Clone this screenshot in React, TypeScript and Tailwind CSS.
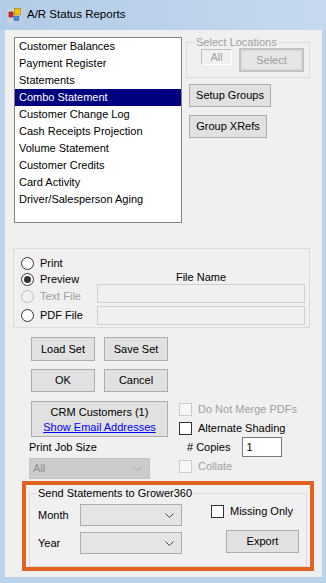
import React from 'react';

const font = "font-['Liberation_Sans',Arial,sans-serif]";

const reports = [
  'Customer Balances',
  'Payment Register',
  'Statements',
  'Combo Statement',
  'Customer Change Log',
  'Cash Receipts Projection',
  'Volume Statement',
  'Customer Credits',
  'Card Activity',
  'Driver/Salesperson Aging',
];

const Btn: React.FC<{ className?: string; children: React.ReactNode }> = ({ className = '', children }) => (
  <button className={`flex items-center justify-center border border-[#adadad] bg-[#e1e1e1] text-black leading-none ${className}`}>
    {children}
  </button>
);

const Radio: React.FC<{ label: string; checked?: boolean; disabled?: boolean; className?: string }> = ({ label, checked, disabled, className = '' }) => (
  <div className={`flex items-center h-[16px] ${className}`}>
    <span
      className={`flex items-center justify-center w-[13px] h-[13px] rounded-full border ${disabled ? 'border-[#bcbcbc] bg-[#f0f0f0]' : 'border-[#333333] bg-white'}`}
    >
      {checked && <span className="w-[7px] h-[7px] rounded-full bg-[#333333]" />}
    </span>
    <span className={`ml-[6px] ${disabled ? 'text-[#a0a0a0]' : 'text-black'}`}>{label}</span>
  </div>
);

const Check: React.FC<{ label: string; disabled?: boolean; className?: string }> = ({ label, disabled, className = '' }) => (
  <div className={`flex items-center h-[13px] ${className}`}>
    <span className={`w-[13px] h-[13px] border ${disabled ? 'border-[#cccccc] bg-[#f7f7f7]' : 'border-[#333333] bg-white'}`} />
    <span className={`ml-[6px] ${disabled ? 'text-[#a0a0a0]' : 'text-black'}`}>{label}</span>
  </div>
);

const Chevron: React.FC<{ color?: string }> = ({ color = '#444444' }) => (
  <svg width="9" height="5" viewBox="0 0 9 5" className="mr-[7px]">
    <polyline points="0.5,0.5 4.5,4.5 8.5,0.5" fill="none" stroke={color} strokeWidth="1" />
  </svg>
);

export default function App() {
  return (
    <div className={`w-[326px] h-[583px] bg-[#bcd3ec] flex flex-col text-[11px] ${font}`}>
      {/* title bar */}
      <div className="h-[30px] flex items-center bg-gradient-to-r from-[#b2cbe6] to-[#c6d9ee]">
        <svg width="16" height="16" viewBox="0 0 16 16" className="ml-[7px]">
          <rect x="0.5" y="1.5" width="14" height="14" fill="#dcdcdc" opacity="0.5" />
          <rect x="2" y="5" width="4" height="5" fill="#d8232a" stroke="#8a1010" strokeWidth="0.6" />
          <rect x="7.5" y="1.5" width="6" height="6.5" fill="#f2c200" stroke="#a08000" strokeWidth="0.6" />
          <rect x="7" y="9.5" width="5" height="4" fill="#4a8fe0" stroke="#2a60b0" strokeWidth="0.6" />
        </svg>
        <span className="ml-[4px] text-[11.5px] text-black">A/R Status Reports</span>
      </div>

      {/* client area */}
      <div className="ml-[5px] mr-[4px] h-[547px] bg-[#f0f0f0] flex flex-col">
        <div className="flex items-start">
          <div className="ml-[9px] mt-[7px] w-[168px] h-[186px] border border-[#828282] bg-white">
            {reports.map(r => (
              <div
                key={r}
                className={`h-[17px] leading-[17px] pl-[4px] ${r === 'Combo Statement' ? 'bg-[#000080] text-white' : 'text-black'}`}
              >
                {r}
              </div>
            ))}
          </div>

          <div className="ml-[4px] flex flex-col items-start">
            <fieldset className="mt-[6px] w-[124px] h-[42px] border border-[#dcdcdc] pl-[8px]">
              <legend className="px-[1px] leading-[13px] text-[#a0a0a0]">Select Locations</legend>
              <div className="flex items-start">
                <div className="ml-[6px] w-[31px] h-[16px] border border-[#bfbfbf] border-r-white border-b-white flex items-center justify-center text-[#a0a0a0]">
                  All
                </div>
                <div className="ml-[7px] -mt-[1px] w-[65px] h-[24px] border-2 border-[#c4c4c4] bg-[#e5e5e5] flex items-center justify-center text-[#a0a0a0]">
                  <span className="w-full h-full border border-[#dadada] flex items-center justify-center">Select</span>
                </div>
              </div>
            </fieldset>
            <Btn className="ml-[3px] mt-[6px] w-[82px] h-[23px]">Setup Groups</Btn>
            <Btn className="ml-[3px] mt-[8px] w-[78px] h-[23px]">Group XRefs</Btn>
          </div>
        </div>

        {/* output options */}
        <div className="ml-[8px] mt-[25px] w-[297px] h-[80px] border border-[#dcdcdc] flex">
          <div className="flex flex-col pl-[7px] pt-[6px] w-[83px]">
            <Radio label="Print" />
            <Radio label="Preview" checked />
            <Radio label="Text File" disabled className="mt-[1px]" />
            <Radio label="PDF File" className="mt-[3px]" />
          </div>
          <div className="flex flex-col pt-[22px]">
            <div className="h-[13px] leading-[13px] text-center text-black">File Name</div>
            <div className="w-[208px] h-[19px] border border-[#d0d0d0] bg-[#f0f0f0]" />
            <div className="mt-[3px] w-[208px] h-[19px] border border-[#d0d0d0] bg-[#f0f0f0]" />
          </div>
        </div>

        <div className="ml-[26px] mt-[9px] flex gap-[9px]">
          <Btn className="w-[64px] h-[24px]">Load Set</Btn>
          <Btn className="w-[64px] h-[24px]">Save Set</Btn>
        </div>
        <div className="ml-[26px] mt-[8px] flex gap-[9px]">
          <Btn className="w-[64px] h-[23px]">OK</Btn>
          <Btn className="w-[64px] h-[23px]">Cancel</Btn>
        </div>

        <div className="mt-[9px] flex items-start">
          <button className="ml-[26px] w-[137px] h-[36px] border border-[#adadad] bg-[#e1e1e1] flex flex-col items-center pt-[4px]">
            <span className="leading-[13px] text-black">CRM Customers (1)</span>
            <span className="mt-[2px] leading-[13px] text-[#0000ff] underline">Show Email Addresses</span>
          </button>
          <div className="ml-[11px] flex flex-col">
            <Check label="Do Not Merge PDFs" disabled className="mt-[2px]" />
            <Check label="Alternate Shading" className="mt-[6px]" />
          </div>
        </div>

        <div className="flex items-center h-[20px]">
          <span className="ml-[24px] w-[158px] text-black">Print Job Size</span>
          <span className="text-black">#  Copies</span>
          <div className="ml-[12px] w-[40px] h-[20px] border border-[#7a7a7a] bg-white flex items-center pl-[3px] text-black">1</div>
        </div>

        <div className="mt-[1px] flex items-start">
          <div className="ml-[24px] w-[121px] h-[21px] bg-[#cccccc] border border-[#c4c4c4] flex items-center justify-between">
            <span className="pl-[3px] text-[#8d8d8d]">All</span>
            <Chevron color="#a8a8a8" />
          </div>
          <Check label="Collate" disabled className="ml-[29px] mt-[2px]" />
        </div>

        {/* Grower360 export */}
        <div className="ml-[17px] mt-[2px] w-[292px] h-[90px] border-4 border-[#e2631f] px-[3px] pt-[2px]">
          <fieldset className="h-[80px] border border-[#dcdcdc] pl-[8px]">
            <legend className="px-[1px] -ml-[1px] leading-[13px] text-black">Send Statements to Grower360</legend>
            <div className="flex pt-[4px]">
              <div className="flex flex-col">
                <div className="flex items-center h-[22px]">
                  <span className="w-[42px] text-black">Month</span>
                  <div className="w-[102px] h-[22px] border border-[#acacac] bg-[#e5e5e5] flex items-center justify-end">
                    <Chevron />
                  </div>
                </div>
                <div className="mt-[6px] flex items-center h-[22px]">
                  <span className="w-[42px] text-black">Year</span>
                  <div className="w-[102px] h-[22px] border border-[#acacac] bg-[#e5e5e5] flex items-center justify-end">
                    <Chevron />
                  </div>
                </div>
              </div>
              <div className="ml-[29px] flex flex-col items-start">
                <Check label="Missing Only" className="mt-[1px]" />
                <Btn className="ml-[15px] mt-[12px] w-[73px] h-[23px]">Export</Btn>
              </div>
            </div>
          </fieldset>
        </div>
      </div>
    </div>
  );
}
